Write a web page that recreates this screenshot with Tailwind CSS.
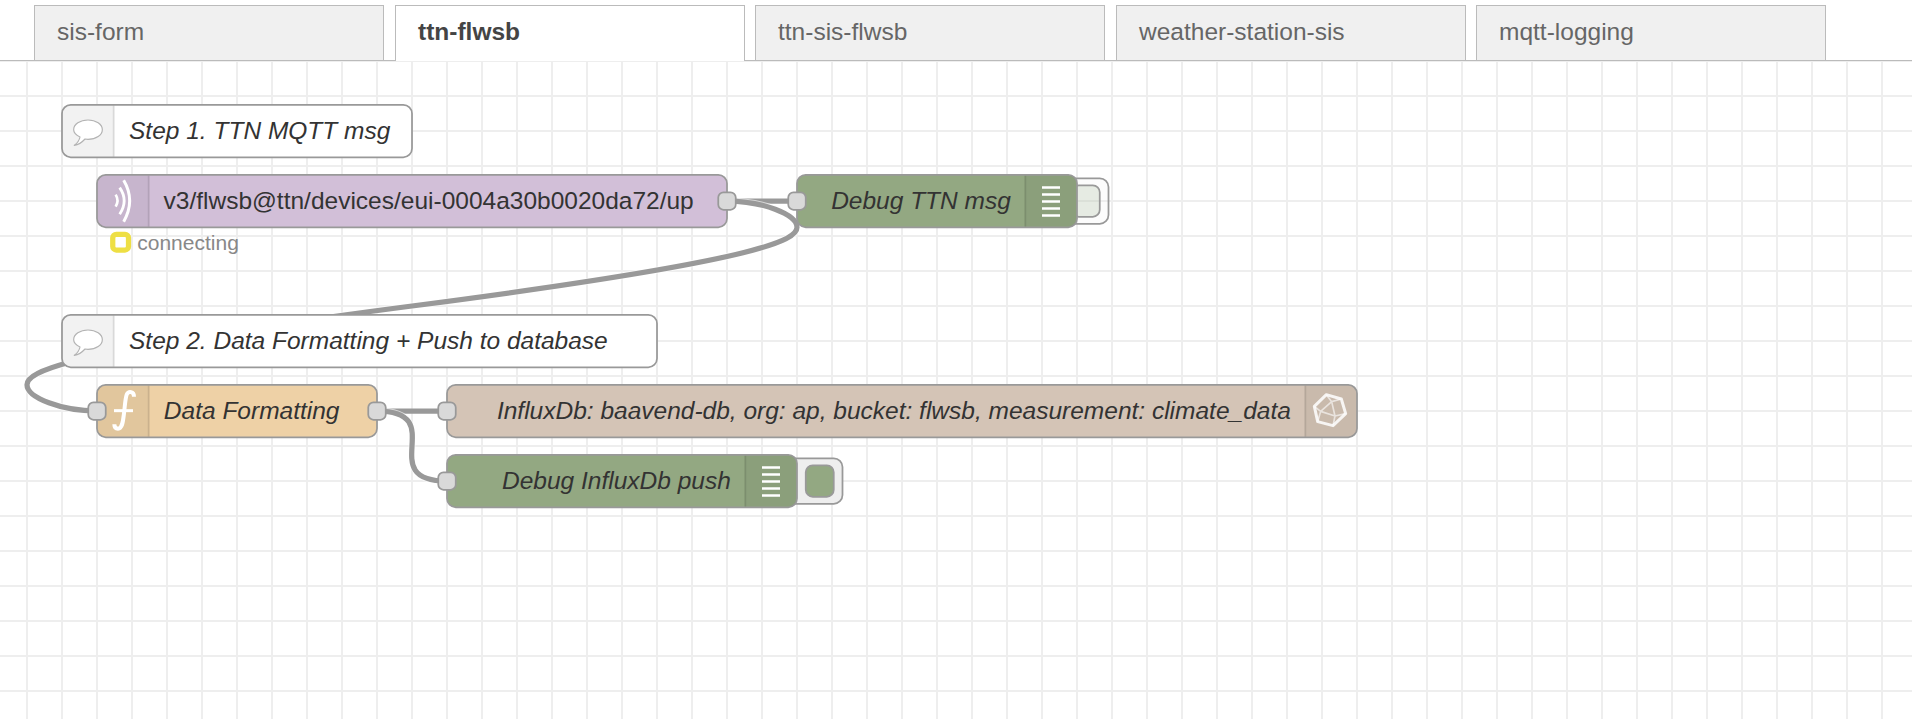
<!DOCTYPE html>
<html lang="en">
<head>
<meta charset="utf-8">
<title>Flow editor</title>
<script src="https://cdn.jsdelivr.net/npm/@tailwindcss/browser@4"></script>
</head>
<body class="flex h-[719px] w-[1912px] flex-col overflow-hidden bg-white font-['Liberation_Sans',Arial,sans-serif]">
  <nav class="flex h-[61px] shrink-0 items-stretch border-b border-[#bbb] pt-[5px] pl-[34px] text-[24.5px] leading-[51px] text-[#666]">
    <a class="mr-[11px] w-[350px] border border-b-0 border-[#bbb] bg-[#f0f0f0] pl-[22px]">sis-form</a>
    <a class="mr-[10px] -mb-px w-[350px] border border-b-0 border-[#bbb] bg-white pl-[22px] font-bold text-[#444]">ttn-flwsb</a>
    <a class="mr-[11px] w-[350px] border border-b-0 border-[#bbb] bg-[#f0f0f0] pl-[22px]">ttn-sis-flwsb</a>
    <a class="mr-[10px] w-[350px] border border-b-0 border-[#bbb] bg-[#f0f0f0] pl-[22px]">weather-station-sis</a>
    <a class="w-[350px] border border-b-0 border-[#bbb] bg-[#f0f0f0] pl-[22px]">mqtt-logging</a>
  </nav>
  <main class="min-h-0 flex-1">
    <svg class="block h-[658px] w-[1912px]" viewBox="0 61 1912 658">
      <defs>
        <pattern id="grid" width="35" height="35" patternUnits="userSpaceOnUse" x="26" y="60">
          <path class="fill-[#eee]" d="M0 0H35V2H2V35H0Z"/>
        </pattern>
        <g id="bubble">
          <path class="fill-white stroke-[#b3b3b3] stroke-[3.5]" stroke-linejoin="round" d="M240 411C228 405 221 397 221 389C221 373 240 360 264 360C288 360 307 373 307 389C307 405 288 418 264 418L255 417C246 427 236 434 223 436C231 430 238 422 240 411Z"/>
        </g>
        <path id="bars" class="fill-white" d="M0 .3H18V2.8H0ZM0 7.3H18V9.8H0ZM0 14.3H18V16.8H0ZM0 21.3H18V23.8H0ZM0 28.3H18V30.8H0Z"/>
      </defs>
      <rect class="fill-[url(#grid)]" y="61" width="1912" height="658"/>

      <g transform="translate(27 61) scale(1.75)">
        <!-- wires -->
        <g class="fill-none">
          <path class="stroke-[#999] stroke-[3]" d="M400 80H440"/>
          <path class="stroke-white/60 stroke-[4]" d="M400 80C420 80 440 87.5 440 95C440 102.5 420 114 220 140S0 177.5 0 185S20 200 40 200"/>
          <path class="stroke-[#999] stroke-[3]" d="M400 80C420 80 440 87.5 440 95C440 102.5 420 114 220 140S0 177.5 0 185S20 200 40 200"/>
          <path class="stroke-[#999] stroke-[3]" d="M200 200H240"/>
          <path class="stroke-white/60 stroke-[4]" d="M200 200C242.4 200 197.6 240 240 240"/>
          <path class="stroke-[#999] stroke-[3]" d="M200 200C242.4 200 197.6 240 240 240"/>
        </g>

        <!-- debug toggles -->
        <g class="stroke-[#999]">
          <rect class="fill-[#eee]/20" x="586" y="67" width="32" height="26" rx="5"/>
          <rect class="fill-[#93a882]/20" x="597" y="71" width="16" height="18" rx="4"/>
          <rect class="fill-[#eee]" x="434" y="227" width="32" height="26" rx="5"/>
          <rect class="fill-[#93a882]" x="445" y="231" width="16" height="18" rx="4"/>
        </g>

        <!-- node bodies -->
        <g class="stroke-[#999]">
          <rect class="fill-white" x="20" y="25" width="200" height="30" rx="5"/>
          <rect class="fill-white" x="20" y="145" width="340" height="30" rx="5"/>
          <rect class="fill-[#d2bfd8]" x="40" y="65" width="360" height="30" rx="5"/>
          <rect class="fill-[#93a882]" x="440" y="65" width="160" height="30" rx="5"/>
          <rect class="fill-[#eed1a6]" x="40" y="185" width="160" height="30" rx="5"/>
          <rect class="fill-[#d4c4b6]" x="240" y="185" width="520" height="30" rx="5"/>
          <rect class="fill-[#93a882]" x="240" y="225" width="200" height="30" rx="5"/>
        </g>

        <!-- icon panels -->
        <g class="fill-black/5">
          <path d="M50 25.5H25Q20.5 25.5 20.5 30V50Q20.5 54.5 25 54.5H50Z"/>
          <path d="M50 145.5H25Q20.5 145.5 20.5 150V170Q20.5 174.5 25 174.5H50Z"/>
          <path d="M70 65.5H45Q40.5 65.5 40.5 70V90Q40.5 94.5 45 94.5H70Z"/>
          <path d="M70 185.5H45Q40.5 185.5 40.5 190V210Q40.5 214.5 45 214.5H70Z"/>
          <path d="M570 65.5H595Q599.5 65.5 599.5 70V90Q599.5 94.5 595 94.5H570Z"/>
          <path d="M730 185.5H755Q759.5 185.5 759.5 190V210Q759.5 214.5 755 214.5H730Z"/>
          <path d="M410 225.5H435Q439.5 225.5 439.5 230V250Q439.5 254.5 435 254.5H410Z"/>
        </g>
        <path class="stroke-black/10" d="M49.5 25.5V54.5M49.5 145.5V174.5M69.5 65.5V94.5M69.5 185.5V214.5M570.5 65.5V94.5M730.5 185.5V214.5M410.5 225.5V254.5"/>

        <!-- ports -->
        <g class="fill-[#d9d9d9] stroke-[#999]">
          <rect x="395" y="75" width="10" height="10" rx="3"/>
          <rect x="435" y="75" width="10" height="10" rx="3"/>
          <rect x="35" y="195" width="10" height="10" rx="3"/>
          <rect x="195" y="195" width="10" height="10" rx="3"/>
          <rect x="235" y="195" width="10" height="10" rx="3"/>
          <rect x="235" y="235" width="10" height="10" rx="3"/>
        </g>

        <!-- connection status -->
        <rect class="fill-none stroke-[#eedf44] stroke-[3]" x="49" y="99" width="9" height="9" rx="2"/>
        <text class="fill-[#888] text-[12px]" x="63" y="108">connecting</text>

        <!-- labels -->
        <g class="fill-[#333] text-[14px]">
          <text class="italic" x="58.3" y="44.8">Step 1. TTN MQTT msg</text>
          <text x="78" y="84.8">v3/flwsb@ttn/devices/eui-0004a30b0020da72/up</text>
          <text class="italic" x="562.2" y="84.8" text-anchor="end">Debug TTN msg</text>
          <text class="italic" x="58.3" y="164.8">Step 2. Data Formatting + Push to database</text>
          <text class="italic" x="78.2" y="204.8">Data Formatting</text>
          <text class="italic" x="722.2" y="204.8" text-anchor="end">InfluxDb: baavend-db, org: ap, bucket: flwsb, measurement: climate_data</text>
          <text class="italic" x="402.2" y="244.8" text-anchor="end">Debug InfluxDb push</text>
        </g>
      </g>

      <!-- icons -->
      <use href="#bubble" transform="scale(.33333)"/>
      <use href="#bubble" transform="translate(0 210) scale(.33333)"/>
      <use href="#bars" x="1042" y="186"/>
      <use href="#bars" x="762" y="466"/>
      <g class="fill-none stroke-white" transform="translate(0 160) scale(.33333)">
        <path class="stroke-[8]" d="M347 104Q358 122 347 140"/>
        <path class="stroke-[8.5]" d="M359 83Q386 122 359 163"/>
        <path class="stroke-[9]" d="M371 61Q407 122 371 185"/>
      </g>
      <g class="fill-none stroke-white" transform="translate(0 300) scale(.33333)">
        <path class="stroke-[12]" d="M402 290C402 274 386 272 380 284C376 295 375 315 372 340C369 365 367 386 354 386C346 386 343 382 343 373"/>
        <path class="stroke-[9]" d="M342 332H399"/>
      </g>
      <g class="fill-none stroke-white" transform="translate(1100 370) scale(.33333)" stroke-linejoin="round">
        <path class="stroke-[9] opacity-85" d="M679 74L724 87L737 131L699 167L653 155L643 109Z"/>
        <path class="stroke-[5] opacity-60" d="M695 95L705 138L662 124ZM679 74L695 95L724 87M737 131L705 138L699 167M643 109L662 124L653 155"/>
      </g>
    </svg>
  </main>
</body>
</html>
